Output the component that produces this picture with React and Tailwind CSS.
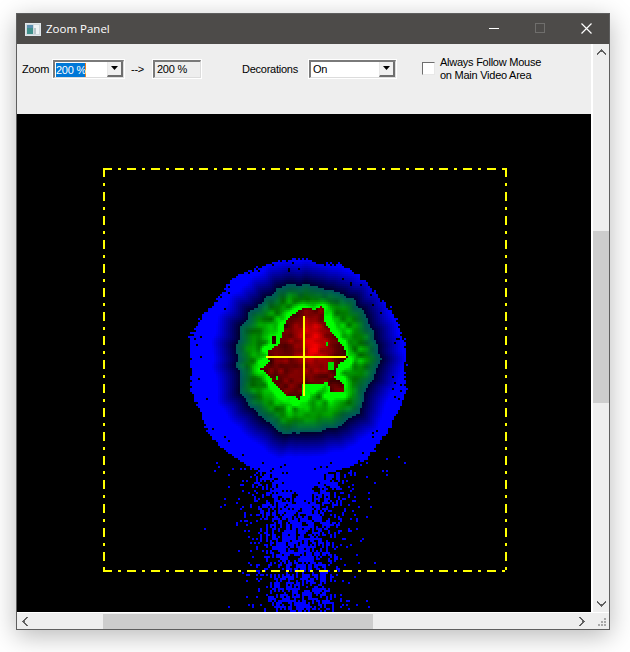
import React, { useMemo } from "react";

const FONT = "font-['Liberation_Sans',Arial,sans-serif]";

function hash0(x, y) {
  const s = Math.sin(x * 12.9898 + y * 78.233) * 43758.5453;
  return s - Math.floor(s);
}
function hash(x, y) {
  return hash0(hash0(x, y) * 91.7 + y * 0.13, hash0(y, x) * 57.3 + x * 0.29);
}
function vnoise(x, y) {
  const xi = Math.floor(x), yi = Math.floor(y);
  let fx = x - xi, fy = y - yi;
  fx = fx * fx * (3 - 2 * fx);
  fy = fy * fy * (3 - 2 * fy);
  const a = hash(xi, yi), b = hash(xi + 1, yi), c = hash(xi, yi + 1), d = hash(xi + 1, yi + 1);
  return a + (b - a) * fx + (c - a) * fy + (a - b - c + d) * fx * fy;
}
const RED = [[345,240],[362,222],[400,200],[430,205],[455,195],[462,245],[480,270],[518,318],[530,350],[500,372],[490,410],[520,430],[520,455],[480,455],[470,425],[440,428],[400,430],[385,480],[375,465],[345,465],[305,420],[285,395],[268,385],[295,365],[290,330],[325,310]].map(([x, y]) => [170 + x / 3, 240 + y / 3]);
function inPoly(x, y, p) {
  let c = false;
  for (let i = 0, j = p.length - 1; i < p.length; j = i++) {
    if ((p[i][1] > y) !== (p[j][1] > y) && x < ((p[j][0] - p[i][0]) * (y - p[i][1])) / (p[j][1] - p[i][1]) + p[i][0]) c = !c;
  }
  return c;
}
function polyDist(x, y, p) {
  let best = 1e9;
  for (let i = 0, j = p.length - 1; i < p.length; j = i++) {
    const [ax, ay] = p[j], [bx, by] = p[i];
    const dx = bx - ax, dy = by - ay;
    const t = Math.max(0, Math.min(1, ((x - ax) * dx + (y - ay) * dy) / (dx * dx + dy * dy)));
    best = Math.min(best, Math.hypot(x - ax - t * dx, y - ay - t * dy));
  }
  return best;
}
function hex(r, g, b) {
  const f = (v) => Math.max(0, Math.min(255, Math.round(v))).toString(16).padStart(2, "0");
  return "#" + f(r) + f(g) + f(b);
}
const GREEN_SPOTS = [[328,362,6,8],[326,342,2,4],[272,336,4,8],[276,376,2,4],[302,384,2,6]];
function pixel(x, y) {
  for (const [sx, sy, w, h] of GREEN_SPOTS) {
    if (x >= sx && x < sx + w && y >= sy && y < sy + h) return sx === 272 ? "#300000" : "#00e000";
  }
  if (inPoly(x, y, RED)) {
    const d = polyDist(x, y, RED);
    const g = Math.exp(-(((x - 312) ** 2) / 160 + ((y - 340) ** 2) / 420));
    const n = vnoise(x / 5, y / 5);
    return hex(45 + Math.min(d, 10) * 3.5 + 130 * g + 75 * n, 0, 0);
  }
  const gcx = 305, gcy = 358;
  const ang = Math.atan2(y - gcy, x - gcx);
  const gn = vnoise(Math.cos(ang) * 4 + 9, Math.sin(ang) * 4 + 9) - 0.5;
  const gn2 = vnoise(Math.cos(ang) * 11 + 30, Math.sin(ang) * 11 + 30) - 0.5;
  const gr = Math.hypot((x - gcx) / 71, (y - gcy) / 75);
  const edge = 1 + gn * 0.08 + gn2 * 0.07;
  if (gr < edge) {
    const t = Math.max(0, Math.min(1, (edge - gr) / 0.5));
    const pd = polyDist(x, y, RED);
    const n = vnoise(x / 6, y / 6) - 0.5;
    const near = Math.max(0, 1 - pd / 9);
    const gv = 85 + 125 * t + 190 * n * t + 120 * near;
    const bv = 95 * Math.max(0, 1 - t * 2.6);
    return hex(0, gv, bv);
  }
  const bcx = 297, bcy = 368;
  const bang = Math.atan2(y - bcy, x - bcx);
  const bn = vnoise(Math.cos(bang) * 5 + 20, Math.sin(bang) * 5 + 20) - 0.5;
  const br = Math.hypot(x - bcx, y - bcy);
  const R = 109 + bn * 7;
  const inner = (edge * 71 * 75) / Math.hypot(75 * Math.cos(ang), 71 * Math.sin(ang));
  const dg = Math.hypot(x - gcx, y - gcy) - inner;
  const blue = hex(0, 0, 45 + dg * 8.5);
  const dx = x - 299;
  const yt = (y - 440) / 172;
  const solid = y >= 440 ? 66 * (1 - yt * 2.9) : 0;
  const v = hash(x, y);
  if (br < R - 1 + 2.5 * v) {
    if (br > R - 12 && hash(y, x) < 0.03) return null;
    return blue;
  }
  if (Math.abs(dx) < solid - 5 * v) return blue;
  if (y < 440 && br < R + 3 && hash(x + 5, y) < 0.1) return "#0000ff";
  if (y >= 440) {
    const sigma = 31 - 7 * Math.min(1, yt * 2);
    const dens = 1.05 - 0.5 * yt;
    const p = dens * Math.exp(-(dx * dx) / (2 * sigma * sigma)) + 0.012 * Math.exp(-(dx * dx) / 4000);
    const vUp = hash(x, y - 2) + 0.1;
    if (Math.min(v, vUp) < p * 0.72) return "#0000ff";
  }
  return null;
}

function Beam() {
  const rects = useMemo(() => {
    const out = [];
    for (let y = 250; y < 612; y += 2) {
      let start = null, color = null;
      for (let x = 180; x <= 420; x += 2) {
        const c = x < 420 ? pixel(x, y) : null;
        if (c !== color) {
          if (color) out.push(<rect key={x + "-" + y} x={start} y={y} width={x - start} height={2} fill={color} />);
          start = x;
          color = c;
        }
      }
    }
    return out;
  }, []);
  return <g shapeRendering="crispEdges">{rects}</g>;
}

function Sunken({ className = "", children }) {
  return (
    <div className={"border border-white " + className}>
      <div className="h-full w-full border-t-2 border-l-2 border-r border-b border-t-[#7a7a7a] border-l-[#7a7a7a] border-r-[#dcdcdc] border-b-[#dcdcdc] flex items-center overflow-hidden">
        {children}
      </div>
    </div>
  );
}

function DropBtn() {
  return (
    <div className="ml-auto h-full w-[16px] bg-[#f0f0f0] border-r-2 border-b-2 border-l border-l-[#e8e8e8] border-r-[#6e6e6e] border-b-[#6e6e6e] flex items-center justify-center">
      <svg width="8" height="5" viewBox="0 0 8 5"><path d="M0 0h7L3.5 4z" fill="#000" /></svg>
    </div>
  );
}

function Chevron({ dir }) {
  const rot = { up: 0, down: 180, left: 270, right: 90 }[dir];
  return (
    <svg width="9" height="7" viewBox="0 0 9 7" style={{ transform: `rotate(${rot}deg)` }} shapeRendering="crispEdges">
      <path d="M4 0h1v1h1v1h1v1h1v1h1v2H8V5H7V4H6V3H3v1H2v1H1v1H0V4h1V3h1V2h1V1h1z" fill="#606060" />
    </svg>
  );
}

function Line({ x1, y1, x2, y2 }) {
  return <line x1={x1} y1={y1} x2={x2} y2={y2} stroke="#ffff00" strokeWidth="2" strokeDasharray="9 6 3 6" />;
}

const LABEL = "h-[20px] leading-[20px] text-[11px] tracking-[-0.25px] whitespace-nowrap";

export default function App() {
  return (
    <div className={"w-[630px] h-[652px] bg-white pt-[13px] pl-[16px] overflow-hidden " + FONT}>
      <div className="w-[594px] h-[617px] flex flex-col border border-[#5e5e5e] bg-[#eeeeee] shadow-[0_6px_24px_rgba(0,0,0,0.28)]">
        <div className="h-[30px] shrink-0 bg-[#4d4b49] flex items-center text-white">
          <svg className="ml-[8px]" width="16" height="13" viewBox="0 0 16 13" shapeRendering="crispEdges">
            <rect width="16" height="13" fill="#dfe6ea" />
            <rect x="1" y="1" width="14" height="11" fill="#cfd8dc" />
            <rect x="2" y="2" width="6" height="9" fill="#3f8f8a" />
            <rect x="2" y="2" width="6" height="3" fill="#5a8fb0" />
            <rect x="9" y="2" width="5" height="9" fill="#eef2f4" />
            <rect x="9" y="5" width="2" height="6" fill="#b8c4ca" />
          </svg>
          <span className="ml-[5px] text-[11.5px] font-['Open_Sans',sans-serif] leading-none">Zoom Panel</span>
          <div className="ml-auto flex items-center">
            <div className="w-[46px] h-[30px] flex items-center justify-center">
              <div className="w-[10px] h-px bg-white mb-[2px]" />
            </div>
            <div className="w-[46px] h-[30px] flex items-center justify-center">
              <div className="w-[10px] h-[10px] border border-[#6f6e6c] mb-[2px]" />
            </div>
            <div className="w-[46px] h-[30px] flex items-center justify-center">
              <svg className="mb-[2px]" width="11" height="11" viewBox="0 0 11 11"><path d="M.5.5l10 10M10.5.5l-10 10" stroke="#fff" strokeWidth="1.2" /></svg>
            </div>
          </div>
        </div>
        <div className="flex-1 min-h-0 flex">
          <div className="w-[574px] flex flex-col">
            <div className="h-[70px] shrink-0 flex items-start pl-[5px] pt-[15px] text-black">
              <span className={LABEL + " w-[28px]"}>Zoom</span>
              <Sunken className="ml-[2px] w-[73px] h-[20px]">
                <div className="flex-1 h-full bg-white flex items-center pl-px">
                  <span className="bg-[#0078d7] text-white h-[14px] leading-[14px] w-[30px] text-[11px] tracking-[-0.25px] whitespace-nowrap border-r border-[#f08020]">200 %</span>
                  <DropBtn />
                </div>
              </Sunken>
              <span className={LABEL + " ml-[6px] w-[11px]"}>--&gt;</span>
              <Sunken className="ml-[10px] w-[50px] h-[20px]">
                <span className="pl-[2px] text-[11px] tracking-[-0.25px] leading-none whitespace-nowrap">200 %</span>
              </Sunken>
              <span className={LABEL + " ml-[40px] w-[58px]"}>Decorations</span>
              <Sunken className="ml-[8px] w-[89px] h-[20px]">
                <div className="flex-1 h-full bg-white flex items-center pl-[2px]">
                  <span className="text-[11px] tracking-[-0.25px] leading-none whitespace-nowrap">On</span>
                  <DropBtn />
                </div>
              </Sunken>
              <div className="ml-[25px] mt-[3px] w-[13px] h-[13px] bg-white border border-t-[#6e6e6e] border-l-[#6e6e6e] border-r-[#e8e8e8] border-b-[#e8e8e8]" />
              <div className="ml-[5px] -mt-[3px] text-[11px] tracking-[-0.25px] leading-[13px] whitespace-nowrap">
                <div>Always Follow Mouse</div>
                <div>on Main Video Area</div>
              </div>
            </div>
            <div className="flex-1 min-h-0 bg-black">
              <svg className="block" width="574" height="498" viewBox="17 114 574 498">
                <Beam />
                <g shapeRendering="crispEdges">
                  <Line x1="103" y1="169" x2="507" y2="169" />
                  <Line x1="103" y1="571" x2="507" y2="571" />
                  <Line x1="104" y1="168" x2="104" y2="572" />
                  <Line x1="506" y1="168" x2="506" y2="572" />
                  <rect x="266" y="356" width="80" height="2" fill="#ffff00" />
                  <rect x="303" y="316" width="2" height="80" fill="#ffff00" />
                </g>
              </svg>
            </div>
          </div>
          <div className="flex-1 border-l-2 border-white flex flex-col items-center">
            <div className="h-[17px] flex items-center justify-center"><Chevron dir="up" /></div>
            <div className="w-full flex-1 flex flex-col pt-[170px]">
              <div className="h-[172px] bg-[#cdcdcd]" />
            </div>
            <div className="h-[17px] flex items-center justify-center"><Chevron dir="down" /></div>
          </div>
        </div>
        <div className="h-[17px] shrink-0 flex items-center border-t border-white">
          <div className="w-[17px] flex justify-center"><Chevron dir="left" /></div>
          <div className="w-[69px]" />
          <div className="w-[270px] h-[15px] bg-[#cdcdcd]" />
          <div className="flex-1" />
          <div className="w-[17px] flex justify-center"><Chevron dir="right" /></div>
          <div className="w-[8px]" />
          <svg className="mr-[2px] mt-[3px]" width="9" height="9" viewBox="0 0 9 9" shapeRendering="crispEdges" fill="#a8a8a8">
            <rect x="6" y="0" width="2" height="2" /><rect x="3" y="3" width="2" height="2" /><rect x="6" y="3" width="2" height="2" />
            <rect x="0" y="6" width="2" height="2" /><rect x="3" y="6" width="2" height="2" /><rect x="6" y="6" width="2" height="2" />
          </svg>
        </div>
      </div>
    </div>
  );
}
